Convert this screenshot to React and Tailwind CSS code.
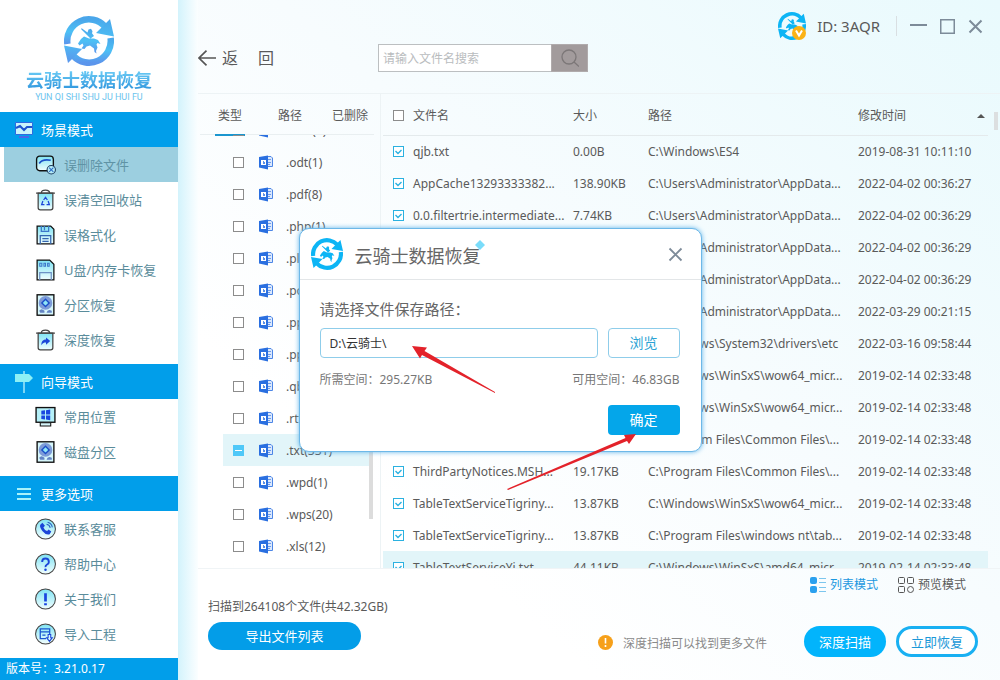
import { useState } from 'react';

const fileTypes = [
  { name: '.mht(2)' },
  { name: '.odt(1)' },
  { name: '.pdf(8)' },
  { name: '.php(1)' },
  { name: '.plist(1)' },
  { name: '.pot(1)' },
  { name: '.pps(1)' },
  { name: '.ppt(1)' },
  { name: '.qbw(1)' },
  { name: '.rtf(14)' },
  { name: '.txt(331)', partial: true },
  { name: '.wpd(1)' },
  { name: '.wps(20)' },
  { name: '.xls(12)' },
];

const files = [
  { name: 'qjb.txt', size: '0.00B', path: 'C:\\Windows\\ES4', date: '2019-08-31 10:11:10' },
  { name: 'AppCache13293333382...', size: '138.90KB', path: 'C:\\Users\\Administrator\\AppData...', date: '2022-04-02 00:36:27' },
  { name: '0.0.filtertrie.intermediate...', size: '7.74KB', path: 'C:\\Users\\Administrator\\AppData...', date: '2022-04-02 00:36:29' },
  { name: '0.1.filtertrie.intermediate...', size: '0.01KB', path: 'C:\\Users\\Administrator\\AppData...', date: '2022-04-02 00:36:29' },
  { name: '0.2.filtertrie.intermediate...', size: '0.01KB', path: 'C:\\Users\\Administrator\\AppData...', date: '2022-04-02 00:36:29' },
  { name: 'AppCache13292963...', size: '92.10KB', path: 'C:\\Users\\Administrator\\AppData...', date: '2022-03-29 00:21:15' },
  { name: 'hosts.txt', size: '0.81KB', path: 'C:\\Windows\\System32\\drivers\\etc', date: '2022-03-16 09:58:44' },
  { name: 'TableTextService.txt', size: '15.71KB', path: 'C:\\Windows\\WinSxS\\wow64_micr...', date: '2019-02-14 02:33:48' },
  { name: 'TableTextServiceYi.txt', size: '44.11KB', path: 'C:\\Windows\\WinSxS\\wow64_micr...', date: '2019-02-14 02:33:48' },
  { name: 'License.txt', size: '19.17KB', path: 'C:\\Program Files\\Common Files\\...', date: '2019-02-14 02:33:48' },
  { name: 'ThirdPartyNotices.MSH...', size: '19.17KB', path: 'C:\\Program Files\\Common Files\\...', date: '2019-02-14 02:33:48' },
  { name: 'TableTextServiceTigriny...', size: '13.87KB', path: 'C:\\Windows\\WinSxS\\wow64_micr...', date: '2019-02-14 02:33:48' },
  { name: 'TableTextServiceTigriny...', size: '13.87KB', path: 'C:\\Program Files\\windows nt\\tab...', date: '2019-02-14 02:33:48' },
  { name: 'TableTextServiceYi.txt', size: '44.11KB', path: 'C:\\Windows\\WinSxS\\amd64_micr...', date: '2019-02-14 02:33:48', active: true },
];

const Logo = ({ className, color = '#0db5f5' }) => (
  <svg viewBox="0 0 50 50" className={className} aria-hidden="true">
    <g fill="none" stroke={color} strokeWidth="6.500">
      <path d="M3.400 28A21.700 21.700 0 0 1 41 10.500" />
      <path d="M46.600 22A21.700 21.700 0 0 1 9 39.500" />
    </g>
    <path fill={color} d="M46 3l4 17.500-18-3.500zM4 47L0 29.500l18 3.500z" />
    <path
      fill={color}
      d="M14 27.500l3-4.500 3-2.500 5 2 5 0 4 1.500 2.500 4-3-1-1 1.500 1 3-1.500 3.500.5 2.500-2-1.500-.5-3.500-4-3-3.500 1-2 2.500-3-.5 2-3-1-2-3 2zM24.500 13.500l2.500-.7 1.500 2.500-.5 2 2 2.700-3.500 2.500-3-3-6.500-6.500.7-.8 5.800 4.300z"
    />
  </svg>
);

const DocIcon = () => (
  <svg viewBox="0 0 14 15" className="w-[14px] h-[15px] shrink-0" aria-hidden="true">
    <path fill="#dbe8fc" d="M8 2h5v10H8z" />
    <path fill="none" stroke="#4d86e6" d="M9 1.500h3l1.500 1.500v8.500H9" />
    <path stroke="#6d9bea" d="M9 4.500h3M9 7.500h3M9 9.500h2" />
    <path fill="#2a6fe0" d="M0 2l9-1.500v14L0 12.500z" />
    <path fill="#fff" d="M2 5h5v5H2z" />
    <path fill="#5a8fe8" d="M4 6h1v1h1v2H4z" />
  </svg>
);

const Gradient = ({ id }) => (
  <defs>
    <linearGradient id={id} x1="0" y1="0" x2="0" y2="1">
      <stop offset="0" stopColor="#7fe3f3" />
      <stop offset="1" stopColor="#f2feff" />
    </linearGradient>
  </defs>
);

const iconShapes = {
  deleted: (
    <>
      <rect x="1.500" y="2" width="16" height="14" rx="3" fill="url(#g-deleted)" stroke="#111" strokeWidth="1.300" />
      <path d="M4 9c2-3 6-4 11-3" fill="none" stroke="#1c50c8" strokeWidth="1.600" />
      <circle cx="15.500" cy="15" r="4" fill="#b7ecf8" stroke="#1d3c5e" />
      <path d="M13.500 13l4 4M17.500 13l-4 4" stroke="#2a6cc4" />
    </>
  ),
  trash: (
    <>
      <path d="M3 4h14v14q0 2-2 2H5q-2 0-2-2z" fill="url(#g-trash)" stroke="#444" strokeWidth="1.200" />
      <path d="M1 4h18M6 4q0-3 4-3t4 3" fill="none" stroke="#444" strokeWidth="1.200" />
      <path d="M8.200 10.500L10 8l1.800 2.500M12.500 11.500l1.200 3.500H11M9 15H6.300l1.200-3.500" fill="none" stroke="#1c46d8" strokeWidth="1.200" />
    </>
  ),
  floppy: (
    <>
      <path d="M2 2h13l3 3v14H2z" fill="url(#g-floppy)" stroke="#111" strokeWidth="1.200" />
      <path d="M6 2v5h7V2M9 2v4" fill="none" stroke="#3d77c9" strokeWidth="1.200" />
      <path d="M5 19v-8h10v8M7 14h6M7 16.500h6" fill="none" stroke="#3466b0" strokeWidth="1.200" />
    </>
  ),
  card: (
    <>
      <path d="M2 1h12l4 4v15H2z" fill="url(#g-card)" stroke="#111" strokeWidth="1.200" />
      <path d="M4.500 4h2v3h-2zM8.500 4h1.500v3H8.500zM12 4h1.500v3H12z" fill="none" stroke="#3d77c9" />
      <path d="M4.500 20v-7h11v7" fill="none" stroke="#6d92c4" strokeWidth="1.200" />
    </>
  ),
  disk: (
    <>
      <rect x="2" y="0.750" width="16" height="19.500" fill="#d6f6fb" stroke="#111" strokeWidth="1.300" />
      <circle cx="10" cy="8.500" r="6.500" fill="#7d9bd8" />
      <path d="M10 5l3.500 3.500L10 12 6.500 8.500z" fill="#8fe6f6" stroke="#1c50c8" strokeWidth="1.300" />
      <path d="M4 16q2-3 5 0v2H5zM11 18q1-4 5-2v2z" fill="#6484c4" />
    </>
  ),
  deep: (
    <>
      <path d="M3 4h14v14q0 2-2 2H5q-2 0-2-2z" fill="url(#g-deep)" stroke="#444" strokeWidth="1.200" />
      <path d="M1 4h18M6 4q0-3 4-3t4 3" fill="none" stroke="#444" strokeWidth="1.200" />
      <path d="M6 15.500c0-4 2-5.500 4.500-5.500V8l4 3.500-4 3.500v-2c-2 0-3 .5-4.500 2.500z" fill="#1c46d8" />
    </>
  ),
  monitor: (
    <>
      <rect x="1" y="1.500" width="18" height="14" fill="#b5f0f8" stroke="#111" strokeWidth="1.300" />
      <path d="M6 4.500l3.500-.5V8H6zM10.500 4l4-.7V8h-4zM6 9h3.500v4L6 12.500zM10.500 9h4v4.700l-4-.7z" fill="#1a45e0" />
      <path d="M5 16h10v3H5z" fill="#d6f6fb" stroke="#111" />
    </>
  ),
  phone: (
    <>
      <circle cx="10" cy="10.500" r="9.500" fill="url(#g-phone)" stroke="#444" />
      <path d="M5 6.500l2-2 2.500 3L8 9q1 2.500 3.500 3.500L13 11l2.500 2-1.500 2.500q-4 1-7-3T5 6.500z" fill="#1a45d8" />
      <path d="M11 6q3 .5 3.500 3.500M12 4q4 1 4.500 5" fill="none" stroke="#2a5fc0" />
    </>
  ),
  help: (
    <>
      <circle cx="10" cy="10.500" r="9.500" fill="url(#g-help)" stroke="#444" />
      <path d="M6.800 8.500q0-3.200 3.200-3.200t3.200 3.200Q13.200 10 11.500 11T10 13.500" fill="none" stroke="#1a45d8" strokeWidth="1.800" />
      <circle cx="10" cy="16" r="1.200" fill="#1a45d8" />
    </>
  ),
  about: (
    <>
      <circle cx="10" cy="10.500" r="9.500" fill="url(#g-about)" stroke="#444" />
      <path d="M8.700 5h2.600v8H8.700zM8.700 14.500h2.600v2H8.700z" fill="#1a45e0" />
    </>
  ),
  project: (
    <>
      <circle cx="10" cy="10.500" r="9.500" fill="url(#g-project)" stroke="#444" />
      <path d="M10.500 15H5V5.500h9v5M5 8.500h9M7 11.500h3" fill="none" stroke="#1a55d0" strokeWidth="1.200" />
      <path d="M12.500 11h2.500v3h1.500l-2.700 3.500-2.800-3.500h1.500z" fill="#d6f6fb" stroke="#1a45d8" />
    </>
  ),
};

const MenuIcon = ({ name, id }) => (
  <svg viewBox="0 0 20 21" className="w-[21px] h-[22px] shrink-0" aria-hidden="true">
    <Gradient id={id} />
    {iconShapes[name]}
  </svg>
);

const sections = [
  {
    title: '场景模式',
    icon: (
      <svg viewBox="0 0 18 18" className="w-[18px] h-[18px]" aria-hidden="true">
        <path fill="#c9f4fb" stroke="#2d6be0" d="M.5 1.500h17v12H.5z" />
        <path d="M1 7l4-2 4 4 3-3h5" fill="none" stroke="#1d54d0" strokeWidth="2" />
        <path fill="#4a66e8" d="M4 15h10v2H4z" />
      </svg>
    ),
    items: [
      { label: '误删除文件', icon: 'deleted', active: true },
      { label: '误清空回收站', icon: 'trash' },
      { label: '误格式化', icon: 'floppy' },
      { label: 'U盘/内存卡恢复', icon: 'card' },
      { label: '分区恢复', icon: 'disk' },
      { label: '深度恢复', icon: 'deep' },
    ],
  },
  {
    title: '向导模式',
    icon: (
      <svg viewBox="0 0 18 22" className="w-[18px] h-[22px]" aria-hidden="true">
        <path d="M9 0v22" stroke="#a5e9f8" strokeWidth="1.500" />
        <path fill="#8df0f5" d="M0 3h14l4 4-4 4H0z" />
      </svg>
    ),
    items: [
      { label: '常用位置', icon: 'monitor' },
      { label: '磁盘分区', icon: 'disk' },
    ],
  },
  {
    title: '更多选项',
    icon: (
      <svg viewBox="0 0 18 12" className="w-[18px] h-[12px]" aria-hidden="true">
        <path d="M2 1h14M2 6h14M2 11h14" stroke="#a8f2fa" strokeWidth="2" />
      </svg>
    ),
    items: [
      { label: '联系客服', icon: 'phone' },
      { label: '帮助中心', icon: 'help' },
      { label: '关于我们', icon: 'about' },
      { label: '导入工程', icon: 'project' },
    ],
  },
];

const Checkbox = ({ label, checked, partial, onChange }) => (
  <span className="grid w-[11px] h-[11px] shrink-0">
    <input
      type="checkbox"
      aria-label={label}
      checked={checked}
      onChange={onChange}
      className={`col-start-1 row-start-1 appearance-none w-[11px] h-[11px] border ${
        partial ? 'bg-[#4fc8f8] border-[#4fc8f8]' : checked ? 'bg-white border-[#2bb1e0]' : 'bg-white border-[#8c8c8c]'
      }`}
    />
    {(checked || partial) && (
      <svg viewBox="0 0 11 11" className="col-start-1 row-start-1 w-[11px] h-[11px] pointer-events-none" aria-hidden="true">
        <path
          d={partial ? 'M2 5.500h7' : 'M2.500 5l2.500 2.500 3.500-3.500'}
          fill="none"
          stroke={partial ? '#fff' : '#2bb1e0'}
          strokeWidth={partial ? 1 : 1.4}
        />
      </svg>
    )}
  </span>
);

const Sidebar = () => (
  <aside className="w-[178px] shrink-0 flex flex-col bg-white">
    <div className="h-28 flex flex-col items-center pt-4 shrink-0">
      <svg className="w-0 h-0 absolute" aria-hidden="true">
        <defs>
          <linearGradient id="logo-fill" x1="0" y1="0" x2="0" y2="1">
            <stop offset="0" stopColor="#4aa6ea" />
            <stop offset="0.500" stopColor="#4cc0f5" />
            <stop offset="1" stopColor="#5b95ec" />
          </linearGradient>
        </defs>
      </svg>
      <Logo className="w-[50px] h-[50px] shrink-0" color="url(#logo-fill)" />
      <h1 className="mt-[3px] text-[18px] leading-[22px] font-bold bg-linear-to-b from-[#6fd0f7] to-[#2b93dc] bg-clip-text text-transparent">
        云骑士数据恢复
      </h1>
      <p className="font-[Roboto,sans-serif] text-[9px] leading-[12px] text-[#6cc4ee]">YUN QI SHI SHU JU HUI FU</p>
    </div>
    <nav className="flex-1">
      {sections.map((section) => (
        <section key={section.title} className="pb-[7px]">
          <h2 className="h-[35px] bg-[#019eea] text-white flex items-center pl-[15px] gap-2">
            {section.icon}
            {section.title}
          </h2>
          <ul>
            {section.items.map((item) => (
              <li key={item.label}>
                <button
                  className={`w-full h-[35px] flex items-center gap-2 pl-[31px] border-l-4 border-white ${
                    item.active ? 'bg-[#9ccfe0] text-[#5f93a5]' : 'text-[#5a8c9b]'
                  }`}
                >
                  <MenuIcon name={item.icon} id={`g-${item.icon}`} />
                  {item.label}
                </button>
              </li>
            ))}
          </ul>
        </section>
      ))}
    </nav>
    <p className="h-[23px] shrink-0 bg-[#019eea] text-white text-[12px] leading-[22px] pl-[6px]">版本号：3.21.0.17</p>
  </aside>
);

const TopBar = () => (
  <header className="pt-3 pb-[21px] text-[#5a5a5a]">
    <div className="h-7 flex items-center justify-end pr-[17px]">
      <div className="relative w-7 h-7">
        <Logo className="w-7 h-7" />
        <svg viewBox="0 0 14 14" className="absolute right-0 bottom-0 w-[14px] h-[14px]" aria-hidden="true">
          <circle cx="7" cy="7" r="7" fill="#fbb215" />
          <path d="M4 4.500l3 5 3-5" fill="none" stroke="#fff" strokeWidth="2" />
        </svg>
      </div>
      <span className="ml-[11px] text-[15px] leading-5">ID: 3AQR</span>
      <div className="ml-4 w-px h-5 bg-[#d9dfe2]" />
      <div className="ml-[13px] flex items-center gap-[13px] text-[#7d8b99]">
        <button aria-label="最小化">
          <svg viewBox="0 0 17 15" className="w-[17px] h-[15px]"><path d="M0 6h17" stroke="currentColor" strokeWidth="2" /></svg>
        </button>
        <button aria-label="最大化">
          <svg viewBox="0 0 15 15" className="w-[15px] h-[15px]"><path d="M.75.75h13.500v13.500H.75z" fill="none" stroke="currentColor" strokeWidth="1.500" /></svg>
        </button>
        <button aria-label="关闭">
          <svg viewBox="0 0 15 15" className="w-[15px] h-[15px]"><path d="M1.500 1.500l12 12M13.500 1.500l-12 12" stroke="currentColor" strokeWidth="2" /></svg>
        </button>
      </div>
    </div>
    <div className="mt-1 flex items-center">
      <button className="w-[180px] flex items-center text-[16px] leading-6">
        <svg viewBox="0 0 18 16" className="w-[18px] h-[16px] mr-[6px]" aria-hidden="true">
          <path d="M18 8H1M8.500.7L1 8l7.500 7.300" fill="none" stroke="#555" strokeWidth="1.700" />
        </svg>
        <span className="mr-5">返</span>
        <span>回</span>
      </button>
      <div className="w-[210px] h-7 flex">
        <input
          type="text"
          aria-label="搜索"
          placeholder="请输入文件名搜索"
          className="min-w-0 flex-1 border border-r-0 border-[#bcbfc1] bg-white px-1 pt-[2px] text-[12px] placeholder:text-[#b9bcbe] outline-none"
        />
        <button aria-label="搜索" className="w-[37px] bg-[#a29b9c] border border-[#b0abac] flex items-center justify-center">
          <svg viewBox="0 0 18 18" className="w-[18px] h-[18px]" fill="none" stroke="#7c7778" strokeWidth="1.300">
            <circle cx="8" cy="8" r="7" />
            <path d="M13 13l5 4.500" />
          </svg>
        </button>
      </div>
    </div>
  </header>
);

const TypePanel = () => (
  <div className="w-[183px] shrink-0 flex flex-col border-r border-[#edf3f5]">
    <div className="h-[41px] shrink-0 ml-[2px] mr-[6px] pl-[15px] flex border-b border-[#e9eff1]">
      <button className="w-[30px] h-[42px] pt-[3px] border-b-2 border-[#1b96cf]">类型</button>
      <button className="ml-[33px] pt-[3px]">路径</button>
      <button className="ml-[30px] pt-[3px]">已删除</button>
    </div>
    <div className="flex-1 min-h-0 flex pl-[25px]">
      <ul className="w-[146px] overflow-hidden flex flex-col justify-end pb-[6px]">
        {fileTypes.map((type) => (
          <li key={type.name} className={`h-8 shrink-0 flex items-center pl-[10px] ${type.partial ? 'bg-[#e2f5f9]' : ''}`}>
            <Checkbox label={type.name} partial={type.partial} checked={false} onChange={() => {}} />
            <span className="ml-[15px] mr-[13px]">
              <DocIcon />
            </span>
            <span className="pt-px">{type.name}</span>
          </li>
        ))}
      </ul>
      <div className="self-end w-1 h-56 mb-[49px] bg-[#dcdcdc]" />
    </div>
  </div>
);

const FileTable = () => {
  const [selected, setSelected] = useState(files.map(() => true));

  const toggle = (index) => {
    setSelected(selected.map((value, i) => (i === index ? !value : value)));
  };

  return (
    <div className="flex-1 min-w-0 ml-[2px] overflow-hidden">
      <table className="w-full table-fixed text-left whitespace-nowrap">
        <colgroup>
          <col className="w-[190px]" />
          <col className="w-[75px]" />
          <col />
          <col className="w-[130px]" />
        </colgroup>
        <thead>
          <tr className="h-[41px] border-b border-[#e4eaec]">
            <th className="font-normal pl-[10px] pt-[3px]">
              <span className="flex items-center gap-[9px]">
                <Checkbox label="全选" checked={false} onChange={() => {}} />
                文件名
              </span>
            </th>
            <th className="font-normal pt-[3px]">大小</th>
            <th className="font-normal pt-[3px]">路径</th>
            <th className="font-normal pt-[3px] pr-[3px]">
              <span className="flex items-center justify-between">
                修改时间
                <svg viewBox="0 0 8 4" className="w-2 h-1" aria-hidden="true"><path fill="#555" d="M4 0l4 4H0z" /></svg>
              </span>
            </th>
          </tr>
        </thead>
        <tbody>
          {files.map((file, i) => (
            <tr key={i} className={`h-8 ${file.active ? 'bg-[#e2f5f9]' : ''}`}>
              <td className="pl-[10px]">
                <span className="flex items-center gap-[9px]">
                  <Checkbox label={file.name} checked={selected[i]} onChange={() => toggle(i)} />
                  <span className="pt-[2px]">{file.name}</span>
                </span>
              </td>
              <td className="pt-[2px]">{file.size}</td>
              <td className="pt-[2px]">{file.path}</td>
              <td className="pt-[2px]">{file.date}</td>
            </tr>
          ))}
        </tbody>
      </table>
    </div>
  );
};

const Footer = () => (
  <footer className="shrink-0 flex justify-between pl-[10px] pr-[22px] border-t border-[#f0f4f6] text-[#5a5a5a]">
    <div className="pt-[30px]">
      <p className="text-[12px] leading-4">扫描到264108个文件(共42.32GB)</p>
      <button className="mt-[7px] w-[153px] h-7 rounded-full bg-[#039de8] text-white text-[13px]">导出文件列表</button>
    </div>
    <div className="pt-2 pb-[23px] text-[12px] leading-4">
      <div className="flex justify-end pr-3 gap-5">
        <button className="flex items-center gap-1 text-[#1b98e0]">
          <svg viewBox="0 0 16 16" className="w-4 h-4" aria-hidden="true">
            <rect width="7" height="7" rx="2" fill="#2ba0ee" />
            <rect y="9" width="7" height="7" rx="2" fill="#2ba0ee" />
            <path d="M9 1.500h7M9 5.500h7M9 10.500h7M9 14.500h7" stroke="#7cc6ee" />
          </svg>
          列表模式
        </button>
        <button className="flex items-center gap-1">
          <svg viewBox="0 0 16 16" className="w-4 h-4" fill="none" stroke="#555" aria-hidden="true">
            <rect x=".5" y=".5" width="6" height="6" rx="1" />
            <rect x="9.500" y=".5" width="6" height="6" rx="1" />
            <rect x=".5" y="9.500" width="6" height="6" rx="1" />
            <circle cx="12.500" cy="12.500" r="3" />
          </svg>
          预览模式
        </button>
      </div>
      <div className="mt-[33px] flex items-center">
        <svg viewBox="0 0 15 16" className="w-[15px] h-4 mr-[10px]" aria-hidden="true">
          <circle cx="7.500" cy="8.500" r="7.500" fill="#f6a01a" />
          <path d="M7.500 4v5.500M7.500 11v2" stroke="#fff" strokeWidth="1.600" />
        </svg>
        <span className="text-[#8a8a8a] mr-[37px] pt-1">深度扫描可以找到更多文件</span>
        <button className="w-[82px] h-[31px] rounded-full bg-[#02b4fc] text-white text-[13px] mr-[10px]">深度扫描</button>
        <button className="w-[82px] h-[31px] rounded-full border-3 border-[#19b0f2] bg-white text-[#1b98d8] text-[13px]">
          立即恢复
        </button>
      </div>
    </div>
  </footer>
);

const SaveDialog = () => {
  const [path, setPath] = useState('D:\\云骑士\\');

  return (
    <div className="absolute inset-0 flex items-center justify-center">
      <div
        role="dialog"
        aria-label="云骑士数据恢复"
        className="relative w-[403px] rounded-[10px] bg-white border border-[#6db8e8] shadow-[0_0_5px_#5fb4ea] text-[#666]"
      >
        <div className="h-[51px] flex items-center pl-[11px] pr-[18px] border-b border-[#e3e6e8]">
          <Logo className="w-8 h-8" />
          <h2 className="relative ml-3 pt-1 text-[18px] leading-6">
            云骑士数据恢复
            <svg viewBox="0 0 10 10" className="absolute top-0 -right-1 w-[10px] h-[10px]" aria-hidden="true">
              <path fill="#7adcfa" d="M5 0l5 5-5 5-5-5z" />
            </svg>
          </h2>
          <button aria-label="关闭" className="ml-auto text-[#7d8b99]">
            <svg viewBox="0 0 15 15" className="w-[15px] h-[15px]"><path d="M1.500 1.500l12 12M13.500 1.500l-12 12" stroke="currentColor" strokeWidth="1.800" /></svg>
          </button>
        </div>
        <div className="pt-[19px] pl-5 pr-[21px] pb-4">
          <label htmlFor="save-path" className="block text-[15px] leading-5">请选择文件保存路径：</label>
          <div className="mt-[9px] flex gap-[10px]">
            <input
              id="save-path"
              type="text"
              value={path}
              onChange={(e) => setPath(e.target.value)}
              className="min-w-0 flex-1 h-[30px] rounded border border-[#8fcdea] px-[9px] text-[12px] text-[#333] outline-none"
            />
            <button className="w-[72px] h-[30px] rounded border border-[#8fcdea] text-[14px] text-[#2ba3d4]">浏览</button>
          </div>
          <div className="mt-[14px] flex justify-between text-[12px] leading-4 text-[#777]">
            <span>所需空间：295.27KB</span>
            <span>可用空间：46.83GB</span>
          </div>
          <div className="mt-[17px] flex justify-end">
            <button className="w-[72px] h-[30px] rounded bg-[#04a6ea] text-white text-[14px]">确定</button>
          </div>
        </div>
        {/* pointer arrows */}
        <svg viewBox="0 0 400 280" className="absolute top-0 left-0 w-[400px] h-[280px] pointer-events-none" fill="#e3222a" aria-hidden="true">
          <path d="M112 117l15 1.500-2.500 3.500L195 163v1L122 126l-2 3.500z" />
          <path d="M336 205l-7 10-2-3L208 261l-1-1L325.500 209l-1.500-3z" />
        </svg>
      </div>
    </div>
  );
};

const App = () => {
  return (
    <div className="relative h-screen min-h-[560px] flex overflow-hidden bg-white text-[13px] leading-5 font-['Noto_Sans','Noto_Sans_CJK_SC',sans-serif]">
      <Sidebar />
      <div className="w-5 shrink-0 bg-linear-to-r from-[#d3f3fc] to-[#fbfeff]" />
      <main className="flex-1 min-w-0 flex flex-col bg-linear-to-bl from-[#e9fafd] via-[#f7fcfe] via-45% to-white to-75%">
        <TopBar />
        <div className="flex-1 min-h-0 flex border-t border-[#edf3f5] text-[12px] leading-4 text-[#5a5a5a]">
          <TypePanel />
          <FileTable />
          <div className="w-3 shrink-0 pl-[6px] pt-[18px]">
            <div className="w-1 h-[18px] bg-[#dcdfe0]" />
          </div>
        </div>
        <Footer />
      </main>
      <SaveDialog />
    </div>
  );
};

export default App;
